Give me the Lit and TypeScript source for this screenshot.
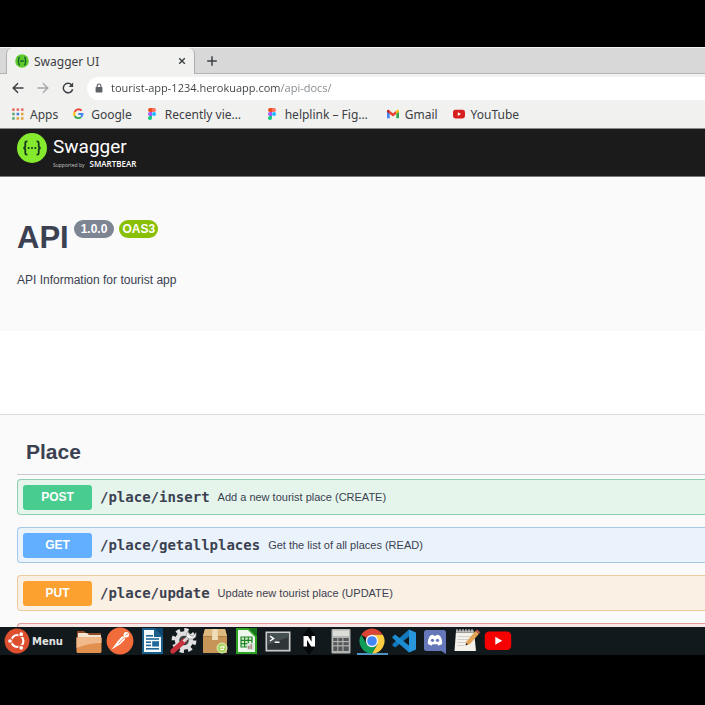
import { LitElement, html, css, svg, TemplateResult } from "lit";
import { customElement, property } from "lit/decorators.js";
import { classMap } from "lit/directives/class-map.js";

const icon = (size: string, body: TemplateResult) =>
  html`<svg viewBox=${size} aria-hidden="true">${body}</svg>`;

const swaggerMark = icon("0 0 30 30", svg`
  <circle cx="15" cy="15" r="15" fill="#85ea2d"/>
  <g fill="none" stroke="#17381f" stroke-width="1.8">
    <path d="M10.4 8.3H9.8Q8.3 8.3 8.3 9.8V12.8Q8.3 14.8 6.4 15Q8.3 15.2 8.3 17.2V20.2Q8.3 21.7 9.8 21.7H10.4"/>
    <path d="M19.6 8.3H20.2Q21.7 8.3 21.7 9.8V12.8Q21.7 14.8 23.6 15Q21.7 15.2 21.7 17.2V20.2Q21.7 21.7 20.2 21.7H19.6"/>
  </g>
  <g fill="#17381f"><circle cx="11.6" cy="15" r="1.1"/><circle cx="15" cy="15" r="1.1"/><circle cx="18.4" cy="15" r="1.1"/></g>`);

const favicon = icon("0 0 14 14", svg`
  <circle cx="7" cy="7" r="6.8" fill="#5fca2c"/>
  <g fill="none" stroke="#17602b" stroke-width="1.3">
    <path d="M5 3.2Q3.7 3.2 3.7 4.6V5.6Q3.7 7 2.7 7Q3.7 7 3.7 8.4V9.4Q3.7 10.8 5 10.8M9 3.2Q10.3 3.2 10.3 4.6V5.6Q10.3 7 11.3 7Q10.3 7 10.3 8.4V9.4Q10.3 10.8 9 10.8M5.2 7H8.8"/>
  </g>`);

const back = icon("0 0 12 12", svg`<path d="M11.5 6H1.4M6 1.2L1.2 6L6 10.8" fill="none" stroke="#3c4043" stroke-width="1.5"/>`);
const forward = icon("0 0 12 12", svg`<path d="M.5 6H10.6M6 1.2L10.8 6L6 10.8" fill="none" stroke="#a5a7a9" stroke-width="1.4"/>`);
const reload = icon("0 0 12 12", svg`<path d="M9.7 3.1A4.7 4.7 0 1 0 10.6 7.2" fill="none" stroke="#3c4043" stroke-width="1.5"/><path d="M11.1 .6V5H6.7Z" fill="#3c4043"/>`);
const lock = icon("0 0 8 10", svg`<path d="M2.1 4.4V2.9A1.9 1.9 0 0 1 5.9 2.9V4.4" fill="none" stroke="#5f6368" stroke-width="1.1"/><rect x=".6" y="4" width="6.8" height="5.4" rx=".7" fill="#5f6368"/>`);
const close = icon("0 0 8 8", svg`<path d="M1.2 1.2L6.8 6.8M6.8 1.2L1.2 6.8" stroke="#3c4043" stroke-width="1.4"/>`);
const plus = icon("0 0 10 10", svg`<path d="M5 .2V9.8M.2 5H9.8" stroke="#3c4043" stroke-width="1.5"/>`);

const apps = icon("0 0 12 12", svg`
  <g fill="#e8685c"><rect x=".2" y=".4" width="2.5" height="2.5"/><rect x="4.6" y=".4" width="2.5" height="2.5"/><rect x="9" y=".4" width="2.5" height="2.5"/></g>
  <rect x=".2" y="4.8" width="2.5" height="2.5" fill="#57a773"/><rect x="4.6" y="4.8" width="2.5" height="2.5" fill="#4a80d8"/><rect x="9" y="4.8" width="2.5" height="2.5" fill="#e0a53a"/>
  <rect x=".2" y="9.2" width="2.5" height="2.5" fill="#57a773"/><rect x="4.6" y="9.2" width="2.5" height="2.5" fill="#d9a63a"/><rect x="9" y="9.2" width="2.5" height="2.5" fill="#e0a53a"/>`);
const google = icon("0 0 12 12", svg`
  <g fill="none" stroke-width="1.9">
    <path d="M8.6 2.7A4.1 4.1 0 0 0 1.7 4" stroke="#ea4335"/>
    <path d="M1.7 4A4.1 4.1 0 0 0 1.7 8" stroke="#fbbc05"/>
    <path d="M1.7 8A4.1 4.1 0 0 0 8 9.1" stroke="#34a853"/>
    <path d="M8 9.1A4.1 4.1 0 0 0 9.5 6H5.3" stroke="#4285f4"/>
  </g>`);
const figma = icon("0 0 12 12", svg`
  <path d="M5 0H3A2 2 0 0 0 3 4H5Z" fill="#f24e1e"/><path d="M5 0H7A2 2 0 0 1 7 4H5Z" fill="#ff7262"/>
  <path d="M5 4H3A2 2 0 0 0 3 8H5Z" fill="#a259ff"/><circle cx="7" cy="6" r="2" fill="#1abcfe"/>
  <path d="M5 8H3A2 2 0 1 0 5 10Z" fill="#0acf83"/>`);
const gmail = icon("0 0 12 12", svg`
  <path d="M0 2.8V10.2H2.7V5Z" fill="#4285f4"/><path d="M12 2.8V10.2H9.3V5Z" fill="#34a853"/>
  <path d="M2.7 2.7L6 5.3L9.3 2.7V6L6 8.6L2.7 6Z" fill="#ea4335"/>
  <path d="M0 3V4L2.7 6V2.7L2 2.1Q.3 1.2 0 3" fill="#c5221f"/><path d="M12 3V4L9.3 6V2.7L10 2.1Q11.7 1.2 12 3" fill="#fbbc04"/>`);
const youtube = icon("0 0 12 12", svg`<rect y="1.7" width="12" height="8.8" rx="2.4" fill="#d81f1f"/><path d="M4.8 4.2V8L8 6.1Z" fill="#fff"/>`);

const ubuntu = icon("0 0 28 28", svg`
  <circle cx="14" cy="14" r="12.4" fill="#dd4f2e"/>
  <circle cx="14.4" cy="14" r="6" fill="none" stroke="#fff" stroke-width="2.2"/>
  <g fill="#fff" stroke="#dd4f2e" stroke-width="1.1"><circle cx="7" cy="14" r="2.4"/><circle cx="18.2" cy="7.2" r="2.4"/><circle cx="18.2" cy="20.8" r="2.4"/></g>`);

const dock: { name: string; active?: boolean; art: TemplateResult }[] = [
  { name: "Files", art: icon("0 0 28 28", svg`
    <path d="M2 4H9L11 6H26V18H2Z" fill="#8d4a24"/><path d="M3 6H12L14 8H26V19H3Z" fill="#f3e3cf"/>
    <path d="M1.5 10.5H26.5V24.5Q26.5 26 25 26H3Q1.5 26 1.5 24.5Z" fill="#e0904f"/>
    <path d="M1.5 10.5H26.5V16Q14 16 1.5 21Z" fill="#f2b98a"/>`) },
  { name: "Postman", art: icon("0 0 28 28", svg`
    <circle cx="14" cy="14" r="13.4" fill="#f26b3a"/>
    <path d="M5.5 22.5L11.5 14.5L15.6 9.8L18.8 9.3L18.8 12.8L14.2 17.2L8.2 21Z" fill="#fff"/><path d="M12.4 16.6L18 10.8" stroke="#f26b3a" stroke-width=".8"/>
    <circle cx="20.3" cy="7.8" r="2.7" fill="#fff"/><path d="M19.4 8.2L22 6.8" stroke="#f26b3a" stroke-width=".8"/>`) },
  { name: "Writer", art: icon("0 0 28 28", svg`
    <path d="M4 1H17L25 9V27H4Z" fill="#1a5f8c"/><path d="M6 3H16V10H23V25H6Z" fill="#f6fafc"/>
    <path d="M17 1H25V9Z" fill="#0e4870"/><g fill="#21689a"><rect x="8" y="8" width="7" height="1.6"/><rect x="8" y="11.2" width="13" height="1.6"/><rect x="8" y="14.4" width="5" height="1.6"/><rect x="8" y="17.6" width="5" height="1.6"/><rect x="8" y="21" width="13" height="1.6"/><rect x="14.2" y="14.2" width="6.8" height="5.3"/></g>`) },
  { name: "Settings", art: icon("0 0 28 28", svg`
    <circle cx="15" cy="13.5" r="10.4" fill="none" stroke="#e1e1e1" stroke-width="4" stroke-dasharray="4.1 4.06"/>
    <circle cx="15" cy="13.5" r="7" fill="#3b4043" stroke="#dfdfdf" stroke-width="4.4"/>
    <path d="M3.8 24.2L15.5 13.6" stroke="#c8303c" stroke-width="5" stroke-linecap="round"/>
    <path d="M14.5 14.5L19.5 9.8" stroke="#d8d8d8" stroke-width="3"/><path d="M19 4.5L20.5 8L24 9.3L27 5.5Q28 11 23.3 12Q17.4 12.3 17.2 8.5Q17.3 5.8 19 4.5" fill="#f4f4f4" stroke="#777" stroke-width=".6"/>`) },
  { name: "Software", art: icon("0 0 28 28", svg`
    <path d="M4 2H24L26 9V26H2V9Z" fill="#c69557"/><path d="M4 2H24L26 9H2Z" fill="#ddb980"/><rect x="2" y="9" width="24" height=".8" fill="#a87c43"/>
    <path d="M11.5 2H16.5L17 13H11Z" fill="#efddb8"/><circle cx="21" cy="21" r="5" fill="#a9d45f" stroke="#dff0bf"/><path d="M18.8 20H23.2M22 18.5L23.5 20L22 21.5M23 22.4H19" fill="none" stroke="#fff"/>`) },
  { name: "Calc", art: icon("0 0 28 28", svg`
    <path d="M4 1H17L25 9V27H4Z" fill="#2ca321"/><path d="M6 3H16L23 10V25H6Z" fill="#eff8ed"/>
    <path d="M17 1H25V9Z" fill="#137519"/><path d="M9 10H20V20H9ZM9 13.3H20M9 16.6H20M12.6 10V20M16.3 10V20" fill="#d5edcf" stroke="#218427" stroke-width="1.2"/><rect x="15.2" y="16" width="7" height="7" fill="#d8e4dc"/><path d="M16 22V19H17.6V22M18.4 22V17.2H20V22" fill="#ac8782"/>`) },
  { name: "Terminal", art: icon("0 0 28 28", svg`
    <rect x="1.5" y="4.5" width="25" height="20" fill="#c9cccb"/><rect x="3.2" y="6.2" width="21.6" height="16.6" fill="#303637"/><path d="M3.2 6.2H24.8V10L3.2 18Z" fill="#465052"/>
    <path d="M6 9.2L9.6 11.6L6 14M10.7 15.3H15.5" fill="none" stroke="#fff" stroke-width="1.4"/>`) },
  { name: "Notion", art: icon("0 0 28 28", svg`
    <path d="M14 0L20 8V20L14 28L8 20V8Z" fill="#05080a"/><path d="M8.5 19.5V9H13L16.6 14.8V9H20V19.5H16.2L12 13V19.5Z" fill="#fff"/>`) },
  { name: "Calculator", art: icon("0 0 28 28", svg`
    <rect x="4.5" y="2" width="19" height="24.5" rx="1" fill="#b4b4b1"/><rect x="6" y="3.5" width="16" height="5.6" fill="#dcdcd8"/>
    <g fill="#55585a"><rect x="6.3" y="11" width="4" height="3"/><rect x="11.4" y="11" width="4" height="3"/><rect x="16.5" y="11" width="5.2" height="3"/><rect x="6.3" y="15.2" width="4" height="3"/><rect x="11.4" y="15.2" width="4" height="3"/><rect x="16.5" y="15.2" width="5.2" height="3"/><rect x="6.3" y="19.4" width="4" height="4.6"/><rect x="11.4" y="19.4" width="4" height="4.6"/><rect x="16.5" y="19.4" width="5.2" height="4.6"/></g>`) },
  { name: "Chrome", active: true, art: icon("0 0 28 28", svg`
    <path d="M14 14L3.2 7.7A12.5 12.5 0 0 1 24.8 7.7H14Z" fill="#db4437"/>
    <path d="M14 7.7H24.8A12.5 12.5 0 0 1 14 26.5L19.5 17Z" fill="#ffcd40"/>
    <path d="M3.2 7.7L8.6 17.1L14 20.2L19.4 17.2L14 26.5A12.5 12.5 0 0 1 3.2 7.7" fill="#0f9d58"/>
    <circle cx="14" cy="14" r="6.2" fill="#f3f3f3"/><circle cx="14" cy="14" r="4.8" fill="#4285f4"/>`) },
  { name: "Code", art: icon("0 0 28 28", svg`
    <path d="M19 2.5L26 5.4V22.6L19 25.5Z" fill="#2997de"/><path d="M19 2.5V9.5L5.2 20.5L2.5 18.5V17Z" fill="#1478bc"/><path d="M19 25.5V18.5L5.2 7.5L2.5 9.5V11Z" fill="#1c8bd2"/>`) },
  { name: "Discord", art: icon("0 0 28 28", svg`
    <path d="M5.5 3H22.5Q25 3 25 5.5V27L20.5 24H5.5Q3 24 3 21.5V5.5Q3 3 5.5 3" fill="#6577b8"/>
    <path d="M8.8 9Q11 7.6 12.5 7.9L13 8.7H15L15.5 7.9Q17 7.6 19.2 9Q21.6 13 21.2 16.8Q19.2 18.6 17.2 18.5L16.4 17.2H11.6L10.8 18.5Q8.8 18.6 6.8 16.8Q6.4 13 8.8 9" fill="#fff"/><circle cx="11.5" cy="13.3" r="1.6" fill="#6577b8"/><circle cx="16.5" cy="13.3" r="1.6" fill="#6577b8"/>`) },
  { name: "Text Editor", art: icon("0 0 28 28", svg`
    <path d="M3 4H21L23 24H1.5Z" fill="#f3f1ea"/><path d="M3 3.5H21V6H3Z" fill="#9d9d98"/><path d="M4 2V5M7 2V5M10 2V5M13 2V5M16 2V5M19 2V5" stroke="#e8e8e8"/>
    <path d="M4.5 9.5H18M4.5 12.5H17M4.5 15.5H14M4 18.5H11" stroke="#c8c8c2" stroke-width=".8"/>
    <path d="M12.5 18.5L13.5 14.5L22.5 4L26 6.7L17 17Z" fill="#e3a456"/><path d="M22.5 4L24 2.4L27.3 5.2L26 6.7Z" fill="#c35a4c"/><path d="M12.5 18.5L13.2 15.8L15 17.5Z" fill="#333"/>`) },
  { name: "YouTube", art: icon("0 0 28 28", svg`<rect x=".8" y="4.5" width="26.4" height="18.6" rx="4.2" fill="#f70000"/><path d="M11.3 9.8V17.8L18.2 13.8Z" fill="#fff"/>`) },
];

const bookmarks = [
  { label: "Apps", art: apps },
  { label: "Google", art: google },
  { label: "Recently vie…", art: figma, long: true },
  { label: "helplink – Fig…", art: figma, long: true },
  { label: "Gmail", art: gmail },
  { label: "YouTube", art: youtube },
];

const reset = css`
  * { box-sizing: border-box; }
  svg { display: block; width: 100%; height: 100%; }
  button { border: 0; padding: 0; margin: 0; background: none; font: inherit; color: inherit; cursor: pointer; }
  a { color: inherit; text-decoration: none; }
  h1, h2, p { margin: 0; }
`;

@customElement("browser-chrome")
export class BrowserChrome extends LitElement {
  static styles = [reset, css`
    :host { display: block; font-family: "Noto Sans", sans-serif; font-size: 12px; color: #3c4043; background: #f1f1f0; }
    .tabs { display: flex; height: 27px; background: #d8d8d8; border-top: 1px solid #f4f4f4; border-bottom: 1px solid #b4b4b4; }
    .tab { display: flex; align-items: center; gap: 5px; width: 189px; height: 26px; margin-left: 6px; padding: 0 8px;
      background: #f1f1f0; border: 1px solid #b0b0b0; border-width: 0 1px; border-radius: 6px 6px 0 0; }
    .tab-title { flex: 1; }
    .favicon { width: 14px; height: 14px; }
    .close { width: 8px; height: 8px; }
    .new-tab { width: 10px; height: 10px; margin: 8px 12px; }
    .toolbar { display: flex; align-items: center; gap: 13px; height: 28px; padding-left: 12px; }
    .nav { width: 12px; height: 12px; flex: none; }
    .omnibox { display: flex; flex: 1; align-items: center; gap: 8px; height: 23px; padding-left: 8px; background: #fff; border-radius: 12px 0 0 12px; }
    .lock { width: 8px; height: 10px; }
    .url { flex: 1; min-width: 0; border: 0; padding: 0; outline: 0; font: 11px/20px "Open Sans", sans-serif; color: transparent;
      background: linear-gradient(to right, #3c4043 169px, #80868b 169px); -webkit-background-clip: text; background-clip: text; }
    .bookmarks { display: flex; align-items: center; gap: 15px; height: 27px; padding: 0 12px 2px; border-bottom: 1px solid #8a8a8a; }
    .bookmark { display: flex; align-items: center; gap: 6px; white-space: nowrap; }
    .bookmark.long { width: 105px; }
    .mark { width: 12px; height: 12px; flex: none; }
  `];

  render() {
    return html`
      <div class="tabs" role="tablist">
        <div class="tab" role="tab" aria-selected="true">
          <span class="favicon">${favicon}</span><span class="tab-title">Swagger UI</span>
          <button class="close" aria-label="Close tab">${close}</button>
        </div>
        <button class="new-tab" aria-label="New tab">${plus}</button>
      </div>
      <div class="toolbar">
        <button class="nav" aria-label="Back">${back}</button>
        <button class="nav" aria-label="Forward">${forward}</button>
        <button class="nav" aria-label="Reload">${reload}</button>
        <label class="omnibox">
          <span class="lock">${lock}</span>
          <input class="url" type="text" aria-label="Address" .value=${"tourist-app-1234.herokuapp.com/api-docs/"} />
        </label>
      </div>
      <nav class="bookmarks">
        ${bookmarks.map((b) => html`
          <a href="#" class=${classMap({ bookmark: true, long: !!b.long })}><span class="mark">${b.art}</span><span>${b.label}</span></a>`)}
      </nav>`;
  }
}

@customElement("api-operation")
export class ApiOperation extends LitElement {
  @property() method = "";
  @property() path = "";
  @property() summary = "";

  static styles = [reset, css`
    .row { display: flex; align-items: center; height: 36px; padding: 0 5px; border: 1px solid; border-right: 0; border-radius: 4px 0 0 4px; }
    .method { width: 69px; height: 25px; border-radius: 3px; color: #fff; font-weight: bold; font-size: 12px; }
    .path { margin-left: 8px; font: bold 14px "DejaVu Sans Mono", monospace; color: #3b4151; }
    .summary { margin-left: 8px; font-size: 11px; }
    .post { background: #e5f5ec; border-color: #8fd0b3; }
    .post .method { background: #49cc90; }
    .get { background: #eaf3fb; border-color: #a3c8e8; }
    .get .method { background: #61affe; }
    .put { background: #faf0e4; border-color: #ecca9c; }
    .put .method { background: #fca130; }
    .delete { background: #fae7e7; border-color: #e39a9a; }
  `];

  render() {
    return html`<div class="row ${this.method.toLowerCase()}">
      ${this.path ? html`
        <button class="method">${this.method}</button>
        <a class="path" href="#">${this.path}</a>
        <span class="summary">${this.summary}</span>` : ""}
    </div>`;
  }
}

@customElement("swagger-page")
export class SwaggerPage extends LitElement {
  static styles = [reset, css`
    :host { display: block; background: #fff; color: #3b4151; font-family: "Liberation Sans", Arial, sans-serif; }
    .topbar { height: 48px; padding: 4px 17px 0; background: #1b1b1b; border-bottom: 1px solid #777; }
    .brand { display: flex; gap: 6px; color: #fff; }
    .logo { width: 30px; height: 30px; }
    .names { display: flex; flex-direction: column; }
    .name { font: 400 19px/28px Roboto, sans-serif; }
    .support { display: flex; align-items: baseline; gap: 5px; font: 5px/6px "Open Sans", sans-serif; color: #c8c8c8; }
    .support b { font-size: 8px; font-weight: 600; color: #fff; }
    .info { height: 154px; padding: 43px 17px 0; background: #fafafa; }
    .heading { display: flex; align-items: flex-start; gap: 5px; }
    .title { font-size: 31px; line-height: 36px; }
    .badge { height: 18px; padding: 0 7px; border-radius: 9px; background: #7d8492; color: #fff; font-weight: bold; font-size: 12px; line-height: 18px; }
    .oas { padding: 0 3px; background: #89bf04; }
    .about { margin-top: 16px; font-size: 12px; line-height: 16px; }
    .operations { margin-top: 83px; padding: 24px 0 0 17px; background: #fafafa; border-top: 1px solid #dcdcdc; }
    .tag { padding: 0 9px 9px; border-bottom: 1px solid #c8c9cc; font-size: 21px; line-height: 26px; }
    .list { display: flex; flex-direction: column; gap: 12px; padding-top: 4px; }
  `];

  render() {
    return html`
      <header class="topbar">
        <a class="brand" href="#">
          <span class="logo">${swaggerMark}</span>
          <span class="names"><span class="name">Swagger</span><span class="support">Supported by <b>SMARTBEAR</b></span></span>
        </a>
      </header>
      <section class="info">
        <div class="heading"><h1 class="title">API</h1><span class="badge">1.0.0</span><span class="badge oas">OAS3</span></div>
        <p class="about">API Information for tourist app</p>
      </section>
      <section class="operations">
        <h2 class="tag">Place</h2>
        <div class="list">
          <api-operation method="POST" path="/place/insert" summary="Add a new tourist place (CREATE)"></api-operation>
          <api-operation method="GET" path="/place/getallplaces" summary="Get the list of all places (READ)"></api-operation>
          <api-operation method="PUT" path="/place/update" summary="Update new tourist place (UPDATE)"></api-operation>
          <api-operation method="DELETE"></api-operation>
        </div>
      </section>`;
  }
}

@customElement("task-bar")
export class TaskBar extends LitElement {
  static styles = [reset, css`
    :host { display: flex; align-items: center; height: 28px; padding-left: 3px; background: #12191d; color: #e4e4e4; }
    .menu { display: flex; align-items: center; gap: 1px; width: 70px; font: bold 10px "DejaVu Sans", sans-serif; }
    .menu-icon { width: 28px; height: 28px; }
    .dock { display: grid; grid-template-columns: repeat(14, 1fr); width: 441px; }
    .app { display: flex; justify-content: center; height: 28px; }
    .art { width: 28px; height: 28px; }
    .active { box-shadow: inset 0 -2px #5294c4; }
  `];

  render() {
    return html`
      <button class="menu"><span class="menu-icon">${ubuntu}</span>Menu</button>
      <nav class="dock">
        ${dock.map((d) => html`<button class=${classMap({ app: true, active: !!d.active })} aria-label=${d.name}><span class="art">${d.art}</span></button>`)}
      </nav>`;
  }
}

@customElement("app-root")
export class AppRoot extends LitElement {
  static styles = css`
    :host { display: flex; flex-direction: column; box-sizing: border-box; height: 100vh; padding: 47px 0 50px; background: #000; overflow: hidden; }
    .chrome, .bar { flex: none; }
    .page { flex: 1; min-height: 0; overflow: hidden; }
  `;

  render() {
    return html`
      <browser-chrome class="chrome"></browser-chrome>
      <swagger-page class="page"></swagger-page>
      <task-bar class="bar"></task-bar>`;
  }
}
